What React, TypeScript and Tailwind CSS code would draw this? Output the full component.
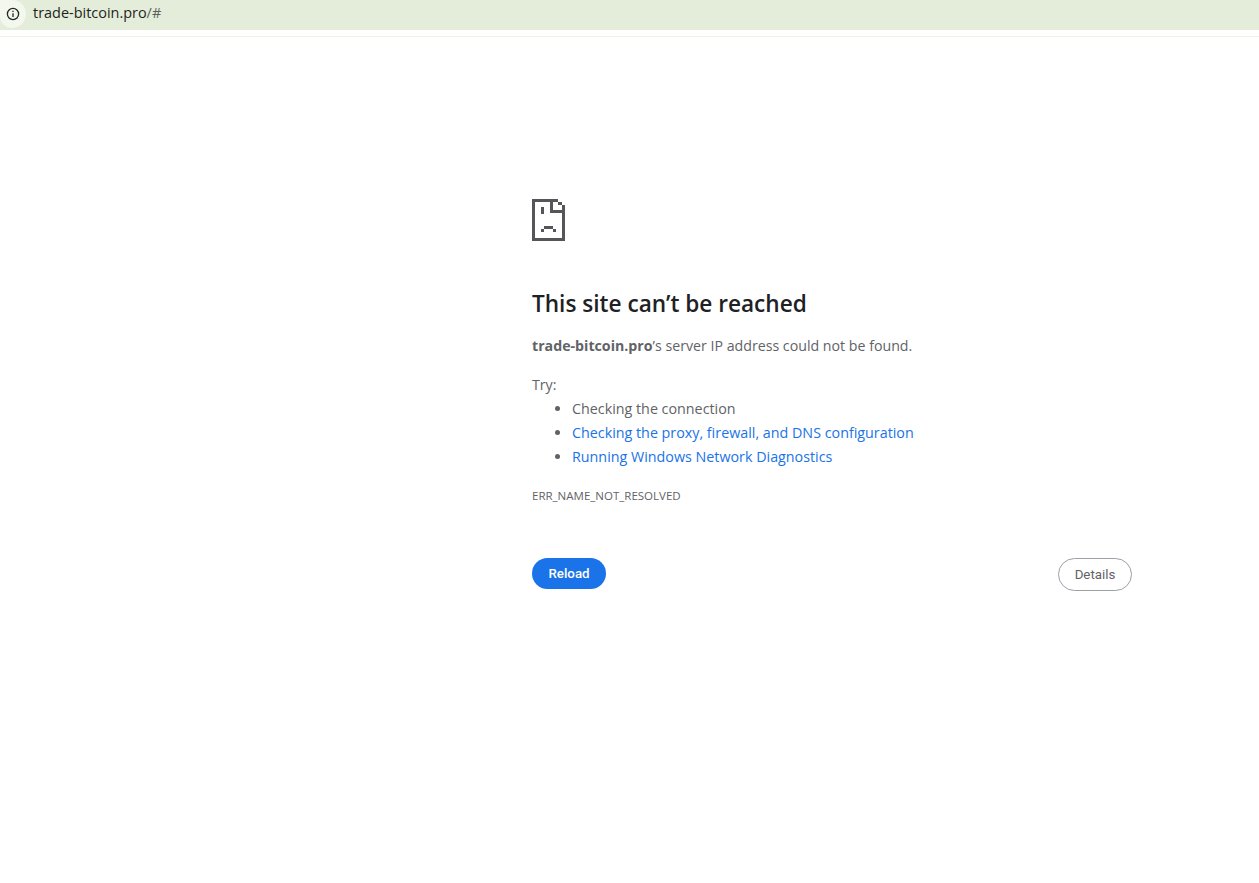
const FONT = "font-['Open_Sans','Noto_Sans',sans-serif]";

function SadTab() {
  return (
    <svg width="33" height="42" viewBox="0 0 33 42" shapeRendering="crispEdges" fill="#545659">
      <path d="M0 0h26v3h-23v36h27v-33h3v36h-33z" />
      <path d="M26 3h4v3h-4z" />
      <path d="M18 0h3v11h9v3h-12z" />
      <path d="M9 8h3v7h-3z" />
      <path d="M12 27h9v3h-9zM9 30h3v3h-3zM21 30h3v3h-3z" />
    </svg>
  );
}

export default function App() {
  return (
    <div className={`min-h-[883px] bg-white ${FONT}`}>
      <header className="h-[37px] bg-white border-b border-[#eff2e4]">
        <div className="h-[30px] bg-[#e4edda] flex items-start">
          <div className="w-[26px] h-[28px] rounded-r-[14px] rounded-bl-[12px] bg-[#f3f7ee] flex items-center justify-center">
            <svg className="-mt-[1px]" width="14" height="14" viewBox="0 0 14 14" fill="none" stroke="#1f2a1f" strokeWidth="1.3">
              <circle cx="7" cy="7" r="5.6" />
              <path d="M7 6.2v3.8M7 3.8v1.3" />
            </svg>
          </div>
          <span className="ml-[7px] mt-[3px] text-[14.45px] leading-[20px] text-[#1d1f1c]">
            trade-bitcoin.pro<span className="text-[#5a6158]">/#</span>
          </span>
        </div>
      </header>
      <main className="pl-[532px] pt-[162px]">
        <div className="w-[600px]">
          <SadTab />
          <h1 className="mt-[47px] text-[22.6px] leading-[32px] font-semibold text-[#202124]">This site can’t be reached</h1>
          <p className="mt-[16px] text-[14.2px] leading-[20px] text-[#5f6368]">
            <strong className="font-bold">trade-bitcoin.pro</strong>’s server IP address could not be found.
          </p>
          <p className="mt-[19px] text-[14.2px] leading-[20px] text-[#5f6368]">Try:</p>
          <ul className="list-disc pl-[40px] mt-[2px] text-[14.3px] leading-[24px] text-[#5f6368]">
            <li>Checking the connection</li>
            <li><span className="text-[#1a73e8]">Checking the proxy, firewall, and DNS configuration</span></li>
            <li><span className="text-[#1a73e8]">Running Windows Network Diagnostics</span></li>
          </ul>
          <p className="mt-[19px] text-[11.5px] leading-[16px] text-[#5f6368]">ERR_NAME_NOT_RESOLVED</p>
          <div className="mt-[54px] flex justify-between items-start font-['Roboto',sans-serif]">
            <button className="h-[31px] w-[74px] rounded-full bg-[#1a73e8] text-white text-[13.3px] font-medium">Reload</button>
            <button className="h-[33px] w-[74px] rounded-full border border-[#9aa0a6] bg-white text-[#5f6368] text-[13.3px] font-normal">Details</button>
          </div>
        </div>
      </main>
    </div>
  );
}
